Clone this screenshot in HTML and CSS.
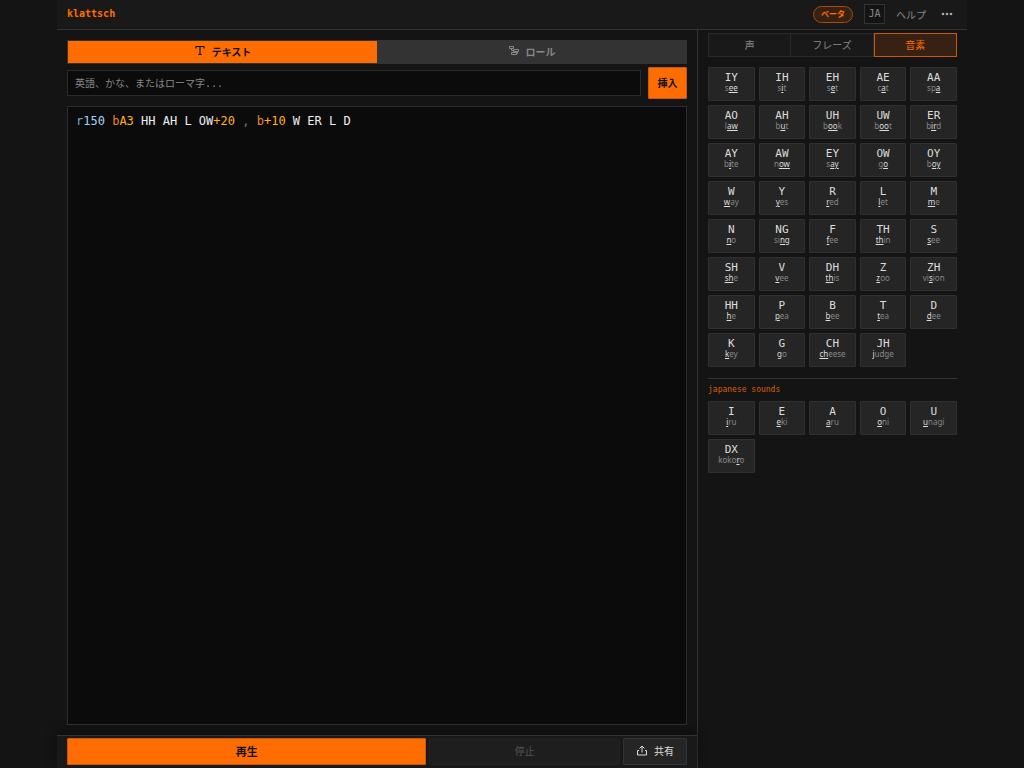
FILE: index.html
```html
<!DOCTYPE html>
<html lang="ja">
  <head>
    <meta charset="UTF-8" />
    <meta name="viewport" content="width=device-width, initial-scale=1.0" />
    <title>klattsch</title>
    <link rel="stylesheet" href="styles.css">
  </head>
  <body>
    <div class="app">
      <header class="topbar">
        <h1 class="brand">klattsch</h1>
        <span class="beta">ベータ</span>
        <button type="button" class="lang">JA</button>
        <a class="help" href="#help">ヘルプ</a>
        <button type="button" class="more" aria-label="メニュー">
          <svg viewBox="0 0 12 4" width="12" height="4" fill="currentColor">
            <circle cx="2" cy="2" r="1.3" />
            <circle cx="6" cy="2" r="1.3" />
            <circle cx="10" cy="2" r="1.3" />
          </svg>
        </button>
      </header>

      <div class="columns">
        <main class="main">
          <div class="workspace">
            <div class="modes">
              <button type="button" class="mode active">
                <svg viewBox="0 0 12 14" width="12" height="14" fill="none" stroke="currentColor" stroke-width="1.2">
                  <path d="M2 4.500V2.500h8v2M6 2.500v8M4.200 10.500h3.600" />
                </svg>
                テキスト
              </button>
              <button type="button" class="mode">
                <svg viewBox="0 0 12 14" width="12" height="14" fill="none" stroke="currentColor">
                  <path d="M1.500 2.500h4v2h-4zM5.500 5.500h5v2h-5zM3.500 8.500h5v2h-5zM3.500 4.500v2h2M9.500 7.500v2h-1" />
                </svg>
                ロール
              </button>
            </div>

            <form class="insert-row" id="insertForm">
              <input type="text" class="phrase" name="phrase" aria-label="挿入するテキスト" placeholder="英語、かな、またはローマ字..." />
              <button type="submit" class="insert">挿入</button>
            </form>

            <div class="editor">
              <pre class="highlight" id="highlight" aria-hidden="true"></pre>
              <textarea class="source" id="source" aria-label="音素" spellcheck="false">r150 bA3 HH AH L OW+20 , b+10 W ER L D</textarea>
            </div>
          </div>

          <footer class="transport">
            <button type="button" class="play">再生</button>
            <button type="button" class="stop" disabled>停止</button>
            <button type="button" class="share">
              <svg viewBox="0 0 12 14" width="12" height="14" fill="none" stroke="currentColor">
                <path d="M6 8.500V2M3.500 4.500L6 2l2.500 2.500M3 6.500H1.500v4.500h9V6.500H9" />
              </svg>
              共有
            </button>
          </footer>
        </main>

        <aside class="side">
          <div class="tabs">
            <button type="button" class="tab">声</button>
            <button type="button" class="tab">フレーズ</button>
            <button type="button" class="tab active">音素</button>
          </div>
          <div class="phonemes" id="english"></div>
          <h2 class="section">japanese sounds</h2>
          <div class="phonemes" id="japanese"></div>
        </aside>
      </div>
    </div>
    <script src="script.js"></script>
  </body>
</html>
```
FILE: styles.css
```css
* {
  box-sizing: border-box;
}

body {
  margin: 0;
  background-color: #141414;
  color: #ddd;
  font-family: "DejaVu Sans Mono", "Noto Sans CJK JP", monospace;
  font-size: 12px;
}

button,
input,
textarea {
  font: inherit;
  color: inherit;
  margin: 0;
  padding: 0;
}

button {
  display: flex;
  align-items: center;
  justify-content: center;
  padding-bottom: 2px;
  background: #252525;
  border: 1px solid #333;
  border-radius: 2px;
  cursor: pointer;
}

.app {
  display: flex;
  flex-direction: column;
  max-width: 910px;
  height: 100vh;
  margin: 0 auto;
}

.topbar {
  display: flex;
  align-items: center;
  height: 30px;
  flex-shrink: 0;
  padding: 0 10px 1px;
  background-color: #191919;
  border-bottom: 1px solid #333;
}

.brand {
  margin: 0 auto 0 0;
  font-size: 10px;
  line-height: 16px;
  color: #ff6d00;
}

.beta {
  padding: 0 7px;
  border: 1px solid #a84d0c;
  border-radius: 9px;
  background-color: #372113;
  color: #ff6d00;
  font-size: 8px;
  line-height: 15px;
  font-weight: bold;
}

.lang {
  width: 21px;
  height: 20px;
  margin-left: 11px;
  border-radius: 0;
  background-color: #141414;
  color: #888;
  font-size: 10px;
}

.help {
  margin-left: 11px;
  color: #888;
  font-size: 10px;
  text-decoration: none;
}

.more {
  width: 20px;
  height: 20px;
  margin-left: 11px;
  padding: 0;
  background: none;
  border: 0;
  color: #aaa;
}

.columns {
  display: flex;
  flex: 1;
  min-height: 0;
}

.main {
  display: flex;
  flex-direction: column;
  flex: 1;
  min-width: 0;
  border-right: 1px solid #333;
}

.workspace {
  display: flex;
  flex-direction: column;
  flex: 1;
  min-height: 0;
  padding: 10px;
}

.modes {
  display: flex;
  height: 24px;
  background-color: #333;
  border: 1px solid #333;
}

.mode {
  flex: 1;
  gap: 6px;
  background: #333;
  border: 0;
  border-radius: 0;
  color: #888;
  font-size: 10px;
  font-weight: bold;
}

.mode.active {
  background-color: #ff6d00;
  color: #111;
}

.insert-row {
  display: flex;
  align-items: center;
  gap: 7px;
  margin: 3px 0 7px;
}

.phrase {
  flex: 1;
  min-width: 0;
  height: 26px;
  padding: 0 7px;
  background-color: #0b0b0b;
  border: 1px solid #2a2a2a;
  border-radius: 0;
  font-size: 10px;
}

.phrase::placeholder {
  color: #888;
}

.insert {
  width: 39px;
  height: 32px;
  background-color: #ff6d00;
  border-color: #c45a0c;
  border-radius: 1px;
  color: #111;
  font-size: 10px;
  font-weight: bold;
}

.editor {
  position: relative;
  flex: 1;
  background-color: #0b0b0b;
  border: 1px solid #2e2e2e;
}

/* the textarea lies over the coloured copy of its own text */
.highlight,
.source {
  position: absolute;
  inset: 0;
  width: 100%;
  height: 100%;
  margin: 0;
  padding: 5px 8px;
  border: 0;
  background: none;
  font: 12px/19px "DejaVu Sans Mono", monospace;
  white-space: pre-wrap;
}

.highlight {
  color: #eee;
}

.source {
  resize: none;
  outline: none;
  color: transparent;
  caret-color: #ff6d00;
}

.rate {
  color: #7aa9cc;
}

.rate-value {
  color: #a5d3f5;
}

.base {
  color: #e8833a;
}

.pitch {
  color: #ffb020;
}

.pause {
  color: #777;
}

.transport {
  display: flex;
  gap: 3px;
  height: 33px;
  flex-shrink: 0;
  padding: 2px 10px 3px;
  background-color: #191919;
  border-top: 1px solid #333;
  box-shadow: 0 -4px 12px rgba(0, 0, 0, 0.4);
}

.play {
  flex: 36;
  background-color: #ff6d00;
  border-color: #c45a0c;
  border-radius: 1px;
  color: #111;
  font-size: 11px;
  font-weight: bold;
}

.stop {
  flex: 19;
  background-color: #1e1e1e;
  border-color: #222;
  color: #555;
  font-size: 10px;
}

.share {
  width: 64px;
  gap: 6px;
  border-radius: 1px;
  font-size: 10px;
}

.side {
  width: 269px;
  flex-shrink: 0;
  padding: 3px 10px;
  overflow-y: auto;
}

.tabs {
  display: flex;
  height: 24px;
  margin-bottom: 10px;
}

.tab {
  flex: 1;
  background: #191919;
  border-color: #2a2a2a;
  border-radius: 0;
  color: #888;
  font-size: 10px;
}

.tab + .tab {
  border-left: 0;
}

.tab.active {
  background-color: #372113;
  border: 1px solid #c45a0c;
  color: #ff6d00;
}

.phonemes {
  display: grid;
  grid-template-columns: repeat(5, 1fr);
  gap: 4px;
}

.phoneme {
  flex-direction: column;
  height: 34px;
  padding-bottom: 3px;
  border-color: #303030;
  border-radius: 1px;
}

.code {
  font-size: 11px;
  line-height: 11px;
}

.word {
  font-family: "Noto Sans", sans-serif;
  font-size: 8px;
  line-height: 10px;
  color: #888;
}

.word u {
  color: #ddd;
}

.section {
  margin: 11px 0 6px;
  padding-top: 5px;
  border-top: 1px solid #333;
  color: #d4600a;
  font-size: 8px;
  font-weight: normal;
  line-height: 11px;
}
```
FILE: script.js
```js
const english = [
  ["IY", "s[ee]"], ["IH", "s[i]t"], ["EH", "s[e]t"], ["AE", "c[a]t"], ["AA", "sp[a]"],
  ["AO", "l[aw]"], ["AH", "b[u]t"], ["UH", "b[oo]k"], ["UW", "b[oo]t"], ["ER", "b[ir]d"],
  ["AY", "b[i]te"], ["AW", "n[ow]"], ["EY", "s[ay]"], ["OW", "g[o]"], ["OY", "b[oy]"],
  ["W", "[w]ay"], ["Y", "[y]es"], ["R", "[r]ed"], ["L", "[l]et"], ["M", "[m]e"],
  ["N", "[n]o"], ["NG", "si[ng]"], ["F", "[f]ee"], ["TH", "[th]in"], ["S", "[s]ee"],
  ["SH", "[sh]e"], ["V", "[v]ee"], ["DH", "[th]is"], ["Z", "[z]oo"], ["ZH", "vi[s]ion"],
  ["HH", "[h]e"], ["P", "[p]ea"], ["B", "[b]ee"], ["T", "[t]ea"], ["D", "[d]ee"],
  ["K", "[k]ey"], ["G", "[g]o"], ["CH", "[ch]eese"], ["JH", "[j]udge"],
];

const japanese = [
  ["I", "[i]ru"], ["E", "[e]ki"], ["A", "[a]ru"], ["O", "[o]ni"], ["U", "[u]nagi"],
  ["DX", "koko[r]o"],
];

const source = document.getElementById("source");
const highlight = document.getElementById("highlight");

function paint() {
  highlight.innerHTML = source.value
    .replace(/&/g, "&amp;")
    .replace(/</g, "&lt;")
    .split(/(\s+)/)
    .map(function (token) {
      return token
        .replace(/^r(\d+)$/, '<span class="rate">r</span><span class="rate-value">$1</span>')
        .replace(/^b(\S+)$/, '<span class="base">b</span><span class="pitch">$1</span>')
        .replace(/^([A-Z]+)(\+\d+)$/, '$1<span class="pitch">$2</span>')
        .replace(/^,$/, '<span class="pause">,</span>');
    })
    .join("");
}

function fill(id, list) {
  const grid = document.getElementById(id);
  list.forEach(function ([code, word]) {
    const button = document.createElement("button");
    button.type = "button";
    button.className = "phoneme";
    button.innerHTML =
      '<span class="code">' + code + '</span><span class="word">' +
      word.replace("[", "<u>").replace("]", "</u>") + "</span>";
    button.addEventListener("click", function () {
      source.value += " " + code;
      paint();
    });
    grid.appendChild(button);
  });
}

document.getElementById("insertForm").addEventListener("submit", function (event) {
  event.preventDefault();
});

source.addEventListener("input", paint);
fill("english", english);
fill("japanese", japanese);
paint();
```
